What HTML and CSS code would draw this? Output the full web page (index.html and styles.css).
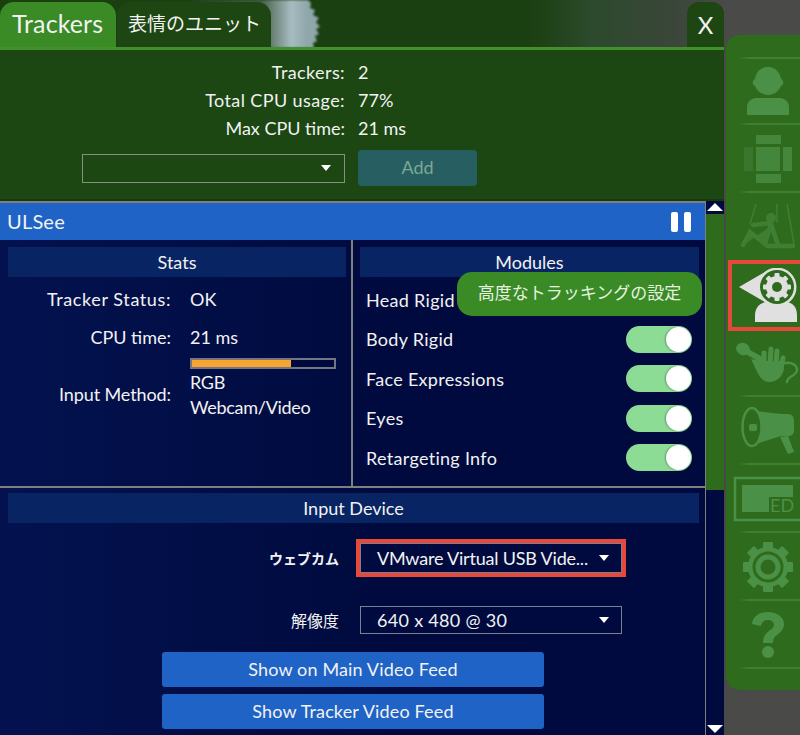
FILE: index.html
```html
<!DOCTYPE html>
<html lang="en">
<head>
  <meta charset="UTF-8">
  <title>Trackers</title>
  <link rel="stylesheet" href="styles.css">
</head>
<body>
<div class="app">
  <svg class="fur" width="150" height="48" viewBox="0 0 150 48">
    <defs>
      <linearGradient id="furfill" x1="0" x2="1" y1="0" y2="0">
        <stop offset="0" stop-color="#24401f"/>
        <stop offset=".55" stop-color="#46604a"/>
        <stop offset=".78" stop-color="#a6bcc0"/>
        <stop offset=".9" stop-color="#8fa6ab"/>
      </linearGradient>
    </defs>
    <path fill="url(#furfill)" d="M0 0H118l3 3-1 5 5 2-2 5 6 3-3 4 4 5-4 2 3 5-4 2 2 5-4 2 1 5H0z"/>
  </svg>

  <div class="window">
    <div class="tabs">
      <div class="tab active">Trackers</div>
      <div class="tab jp">表情のユニット</div>
      <div class="close">X</div>
    </div>

    <div class="top">
      <div class="info"><span class="k">Trackers:</span><span>2</span></div>
      <div class="info"><span class="k">Total CPU usage:</span><span>77%</span></div>
      <div class="info maxcpu"><span class="k">Max CPU time:</span><span>21 ms</span></div>
      <div class="addrow">
        <div class="select empty"><i class="caret"></i></div>
        <div class="add">Add</div>
      </div>
    </div>

    <div class="scrollarea">
      <div class="content">
        <div class="head">
          <span class="name">ULSee</span>
          <span class="pause"><i></i><i></i></span>
        </div>

        <div class="cols">
          <div class="col left">
            <div class="band">Stats</div>
            <div class="stat s1"><span class="k">Tracker Status:</span><span>OK</span></div>
            <div class="stat s2"><span class="k">CPU time:</span><span>21 ms</span></div>
            <div class="stat s3">
              <span class="k">Input Method:</span>
              <div class="method">
                <div class="meter"><b></b></div>
                <div>RGB</div>
                <div>Webcam/Video</div>
              </div>
            </div>
          </div>
          <div class="col right">
            <div class="band">Modules</div>
            <div class="mod"><span>Head Rigid</span><span class="toggle"></span></div>
            <div class="mod"><span>Body Rigid</span><span class="toggle"></span></div>
            <div class="mod"><span>Face Expressions</span><span class="toggle"></span></div>
            <div class="mod"><span>Eyes</span><span class="toggle"></span></div>
            <div class="mod"><span>Retargeting Info</span><span class="toggle"></span></div>
            <div class="tip">高度なトラッキングの設定</div>
          </div>
        </div>

        <div class="device">
          <div class="band">Input Device</div>
          <div class="field f1">
            <span class="lbl strong">ウェブカム</span>
            <div class="select mark">VMware Virtual USB Vide...<i class="caret"></i></div>
          </div>
          <div class="field f2">
            <span class="lbl">解像度</span>
            <div class="select">640 x 480 @ 30<i class="caret"></i></div>
          </div>
          <div class="btn">Show on Main Video Feed</div>
          <div class="btn">Show Tracker Video Feed</div>
        </div>
      </div>

      <div class="scrollbar">
        <div class="arrow up"></div>
        <div class="thumb"></div>
        <div class="arrow down"></div>
      </div>
    </div>
  </div>

  <div class="side">
    <div class="sitem">
      <svg width="42" height="48" viewBox="0 0 42 48"><path d="M21 0c7 0 12 5 13 12 3 1 3 6 0 7-2 5-7 9-13 9s-11-4-13-9c-3-1-3-6 0-7C9 5 14 0 21 0z"/><path d="M0 48V40c0-5 4-9 10-9h22c6 0 10 4 10 9v8z"/></svg>
    </div>
    <div class="sitem faded">
      <svg width="48" height="48" viewBox="0 0 48 48"><rect x="12" y="0" width="25" height="9"/><rect x="12" y="12" width="24" height="24"/><rect x="12" y="39" width="25" height="9"/><rect x="0" y="12" width="9" height="24" opacity=".5"/><rect x="39" y="12" width="9" height="24"/></svg>
    </div>
    <div class="sitem puppet">
      <svg width="54" height="46" viewBox="0 0 54 46" fill="none" stroke-linecap="round">
        <path class="thin" d="M15 0L9 20M36 0V18M46 0l7 40"/>
        <circle class="solid" cx="30" cy="14" r="5"/>
        <path class="limb" d="M12 21l18-2M30 20l7 21M2 41l7-13 15 12 5-17M27 42H52"/>
      </svg>
    </div>
    <div class="sitem tracker">
      <svg width="61" height="55" viewBox="0 0 61 55">
        <g class="w">
          <path d="M16 54V47c0-8 6-13 12-13h19c6 0 11 5 11 13v7z"/>
          <path d="M0 19L26 4v30z"/>
          <circle cx="38" cy="19" r="19.500"/>
        </g>
        <circle cx="38" cy="19" r="17" class="d"/>
        <g class="w">
          <circle cx="38" cy="19" r="11"/>
          <rect x="35.500" y="5" width="5" height="28" rx="1"/>
          <rect x="24" y="16.500" width="28" height="5" rx="1"/>
          <rect x="35.500" y="5" width="5" height="28" rx="1" transform="rotate(45 38 19)"/>
          <rect x="35.500" y="5" width="5" height="28" rx="1" transform="rotate(-45 38 19)"/>
        </g>
        <circle cx="38" cy="19" r="5" class="d"/>
      </svg>
    </div>
    <div class="sitem">
      <svg width="64" height="42" viewBox="0 0 64 42" class="mic">
        <ellipse cx="7" cy="7" rx="7" ry="6" transform="rotate(20 7 7)"/>
        <path class="st7" d="M8 8l18 10"/>
        <path d="M15 17l10 2 22 0 1 8c-1 6-6 13-15 13-9 0-12-11-18-23z"/>
        <path class="st5" d="M28 24L28 11M34 22L35 7M40 22L41 9M45 26L47 16"/>
        <path class="st2" d="M47 22c6-3 14 0 14 6 0 6-10 6-10 12"/>
      </svg>
    </div>
    <div class="sitem">
      <svg width="54" height="48" viewBox="0 0 54 48">
        <ellipse class="outline" cx="11" cy="20" rx="9.500" ry="19"/>
        <path d="M15 4L40 7h7c4 0 6 3 6 7v9c0 4-2 6-6 6h-7L15 37c4-5 5-11 5-17S19 9 15 4z"/>
        <rect x="8" y="17" width="8" height="7" rx="2"/>
        <path d="M39 30l8-1 6 16-6 2z"/>
      </svg>
    </div>
    <div class="sitem">
      <svg width="66" height="44" viewBox="0 0 66 44" class="edlogo">
        <rect class="outline" x="1" y="1" width="68" height="42"/>
        <path d="M8 8H59V20H35V35H8z"/>
        <text x="36" y="35">ED</text>
      </svg>
    </div>
    <div class="sitem">
      <svg width="50" height="50" viewBox="0 0 50 50"><rect x="20" y="0" width="10" height="50" rx="1"/><rect x="0" y="20" width="50" height="10" rx="1"/><rect x="20" y="0" width="10" height="50" rx="1" transform="rotate(45 25 25)"/><rect x="20" y="0" width="10" height="50" rx="1" transform="rotate(-45 25 25)"/><circle cx="25" cy="25" r="20"/><circle cx="25" cy="25" r="15.500" class="d"/><circle cx="25" cy="25" r="12.500"/><circle cx="25" cy="25" r="7.500" class="d"/></svg>
    </div>
    <div class="sitem">
      <svg width="32" height="46" viewBox="0 0 32 46"><path d="M0 12C1 4 8 0 16 0c9 0 16 5 16 12 0 5-3 8-7 11-3 2-4 4-4 8H11c0-6 2-9 6-12 3-2 5-4 5-6 0-3-3-5-6-5-4 0-6 2-7 6z"/><circle cx="16" cy="40" r="6"/></svg>
    </div>
  </div>
  <div class="marker"></div>
</div>
</body>
</html>
```

FILE: styles.css
```css
*{margin:0;padding:0;box-sizing:border-box;}
html,body{width:800px;height:735px;overflow:hidden;background:#4a4a48;}
body{font-family:"Lato","Noto Sans CJK JP",sans-serif;font-size:18px;color:#f2f2f2;}
.app{position:relative;width:800px;height:735px;display:flex;align-items:flex-start;overflow:hidden;
  background:linear-gradient(90deg,#1a3f10 0,#1a3f10 66%,#2c4a2c 74%,#3a463a 84%,#4a4a48 91%);}
.fur{position:absolute;left:190px;top:0;filter:blur(1px);}

/* main window */
.window{position:relative;width:724px;height:735px;display:flex;flex-direction:column;flex:none;}
.tabs{height:47px;display:flex;align-items:flex-end;gap:1px;}
.tab{height:45px;border-radius:14px 14px 0 0;background:#1d4612;white-space:nowrap;}
.tab.active{background:#3a8a26;width:116px;font-size:25px;line-height:43px;padding-left:12px;letter-spacing:.1px;}
.tab.jp{width:154px;font-size:19px;line-height:43px;padding-left:11px;}
.close{margin-left:auto;width:37px;height:45px;border-radius:12px 12px 0 0;background:#1d4612;text-align:center;line-height:45px;font-size:24px;}

.top{height:154px;background:#1c4712;border-top:3px solid #41922c;border-bottom:2px solid #173a0e;display:flex;flex-direction:column;padding-top:9px;}
.info{display:flex;height:28px;line-height:27px;}
.info .k{width:345px;text-align:right;margin-right:13px;letter-spacing:.4px;}
.info.maxcpu .k{letter-spacing:0;}
.addrow{display:flex;margin-top:7px;padding-left:82px;align-items:center;}
.select{position:relative;height:29px;border:1px solid #84917f;}
.select.empty{width:263px;}
.add{margin-left:13px;width:119px;height:36px;border-radius:4px;background:#265e62;color:#7ea893;text-align:center;line-height:35px;}
.caret{position:absolute;right:13px;top:50%;margin-top:-3px;border-left:5px solid transparent;border-right:5px solid transparent;border-top:6px solid #fff;}

.scrollarea{flex:1;display:flex;min-height:0;background:#000a3e;}
.content{width:706px;flex:none;border-top:2px solid #7d7f80;border-right:1px solid #7d7f80;background:linear-gradient(90deg,#03124f,#000a3e 55%);}
.head{height:37px;background:#1f63c6;display:flex;justify-content:space-between;align-items:center;padding:0 14px 0 7px;font-size:20px;letter-spacing:.2px;}
.name{margin-bottom:2px;}
.pause{display:flex;gap:6px;}
.pause i{display:block;width:7px;height:20px;border-radius:2px;background:#fff;}

.cols{display:flex;height:248px;border-bottom:2px solid #7d7f80;}
.col{position:relative;flex:none;}
.col.left{width:353px;border-right:2px solid #7d7f80;padding:7px 5px 0 8px;}
.col.right{flex:1;padding:7px 6px 0 7px;}
.band{height:30px;background:#082463;text-align:center;line-height:30px;}
.stat{display:flex;}
.stat .k{width:163px;text-align:right;margin-right:19px;letter-spacing:.6px;}
.s1{margin-top:8px;line-height:28px;}
.s2{margin-top:10px;line-height:28px;}
.s2 .k{letter-spacing:0;}
.s3{margin-top:7px;align-items:center;}
.s3 .k{margin-top:9px;letter-spacing:-.1px;}
.method{line-height:25px;letter-spacing:-.3px;}
.meter{width:146px;height:11px;border:2px solid #74777f;background:#000a3e;margin-bottom:1px;}
.meter b{display:block;width:70%;height:100%;background:#f7a431;}

.mod{display:flex;justify-content:space-between;align-items:center;height:39.500px;padding:0 0 0 6px;letter-spacing:.3px;}
.mod:nth-of-type(2){margin-top:3px;}
.toggle{position:relative;width:66px;height:27px;border-radius:14px;background:#8ddc96;margin-right:7px;}
.toggle:after{content:"";position:absolute;right:1px;top:1px;width:25px;height:25px;border-radius:50%;background:#fff;box-shadow:-1px 0 2px rgba(0,0,0,.3);}
.tip{position:absolute;left:104px;top:32px;width:245px;height:44px;border-radius:15px;background:#3a8a26;text-align:center;line-height:42px;color:#e6f2e0;font-size:17px;}

.device{padding:5px 6px 0 8px;}
.field{display:flex;align-items:center;}
.lbl{width:331px;text-align:right;margin-right:21px;font-size:16px;}
.lbl.strong{font-weight:700;font-size:14px;}
.field .select{width:262px;border-color:#7c7f90;padding-left:16px;letter-spacing:-.2px;}
.field .caret{right:12px;}
.f1{margin-top:20px;}
.f1 .select{height:30px;line-height:28px;}
.f2{margin-top:33px;}
.f2 .select{height:28px;line-height:26px;letter-spacing:.3px;}
.select.mark{box-shadow:0 0 0 4px #e8483a;}
.btn{margin-left:154px;width:382px;height:35px;border-radius:3px;background:#1f63c6;text-align:center;line-height:34px;margin-top:7px;letter-spacing:.15px;}
.f2 + .btn{margin-top:18px;}

.scrollbar{width:18px;flex:none;display:flex;flex-direction:column;background:#000a3e;}
.arrow{height:13px;background:#000a3e;position:relative;}
.arrow:after{content:"";position:absolute;left:1px;border-left:8px solid transparent;border-right:8px solid transparent;}
.arrow.up:after{top:2px;border-bottom:8px solid #fff;}
.arrow.down{margin-top:auto;}
.arrow.down:after{bottom:2px;border-top:8px solid #fff;}
.thumb{height:276px;background:#2f6b1c;}

/* right side bar */
.side{flex:1;margin:35px 0 0 2px;height:655px;border-radius:14px 0 0 14px;background:#2f6b1c;display:flex;flex-direction:column;padding-top:22px;overflow:hidden;}
.side svg{display:block;fill:#4b9047;flex:none;}
.side .d{fill:#2f6b1c;}
.side .outline{fill:none;stroke:#4b9047;stroke-width:2.500;}
.sitem{height:68px;flex:none;display:flex;align-items:center;justify-content:center;padding-left:10px;
  background:linear-gradient(90deg,transparent 12px,#3f8130 24px) bottom/100% 2px no-repeat;}
.sitem:first-child{background:linear-gradient(90deg,transparent 12px,#3f8130 24px) bottom/100% 2px no-repeat,
  linear-gradient(90deg,transparent 12px,#3f8130 24px) top/100% 2px no-repeat;}
.faded svg{opacity:.75;}
.puppet{background:none;}
.puppet svg{opacity:.55;}
.puppet .thin{stroke:#4b9047;stroke-width:1.500;}
.puppet .solid{fill:#4b9047;}
.puppet .limb{stroke:#4b9047;stroke-width:4.500;}
.tracker{background:none;justify-content:flex-start;padding-left:13px;}
.tracker .w{fill:#dfe0df;}
.mic .st7,.mic .st5,.mic .st2{fill:none;stroke:#4b9047;stroke-linecap:round;}
.mic .st7{stroke-width:6;}
.mic .st5{stroke-width:5;}
.mic .st2{stroke-width:2.500;}
.side .edlogo{margin-left:-2px;overflow:visible;}
.edlogo text{font-family:"Lato",sans-serif;font-size:18px;fill:#4b9047;}

.marker{position:absolute;left:728px;top:260px;width:72px;height:71px;border:4px solid #e8483a;border-right:0;}
```
